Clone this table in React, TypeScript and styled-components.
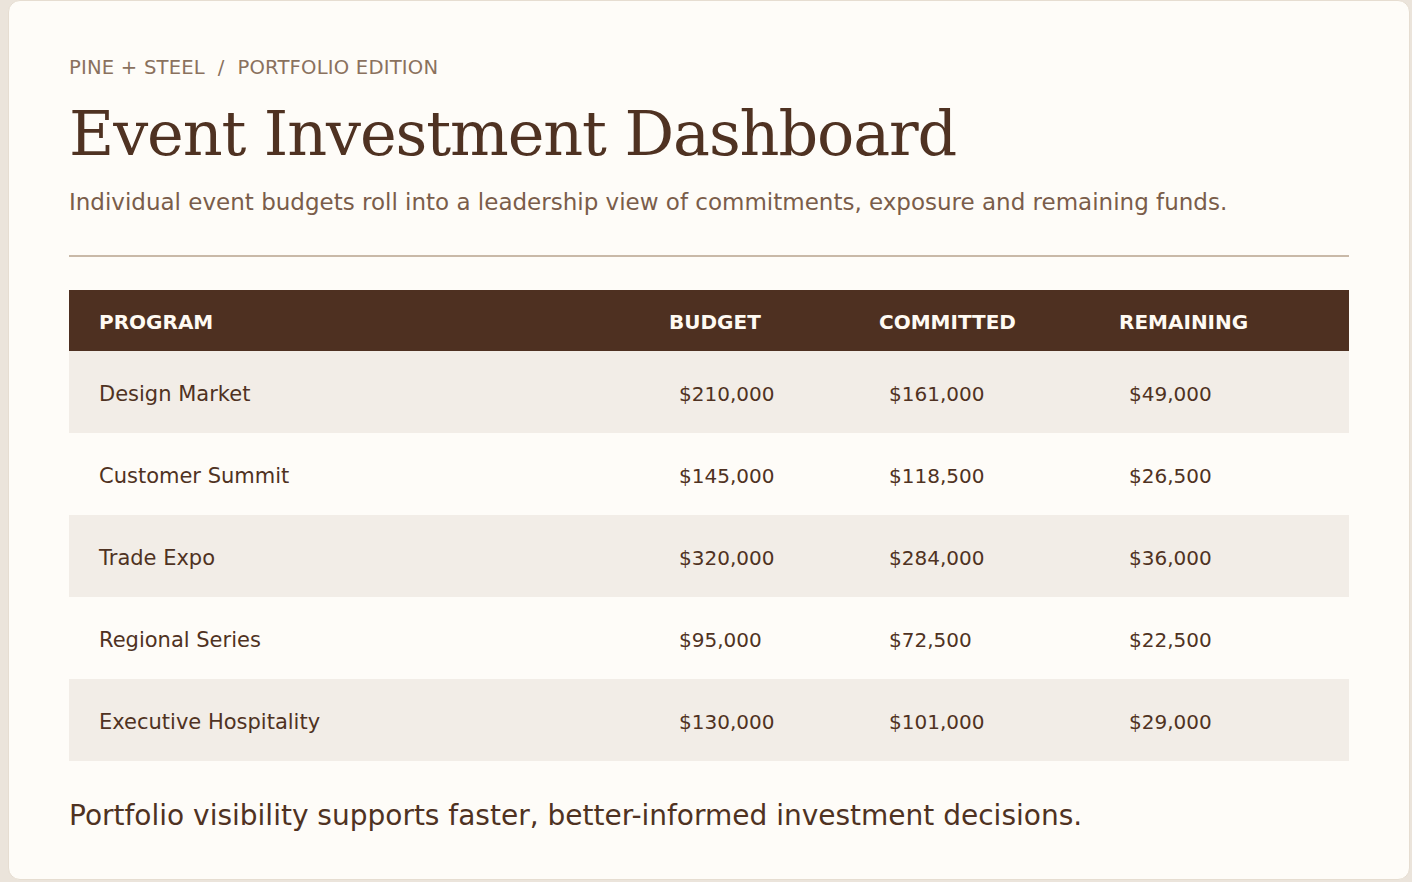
import React from 'react'
import styled, { createGlobalStyle } from 'styled-components'

const GlobalStyle = createGlobalStyle`
  html, body {
    margin: 0;
    padding: 0;
    background: #ebe4db;
  }
  body {
    font-family: "DejaVu Sans", "Liberation Sans", sans-serif;
    color: #4f3222;
  }
`

const Page = styled.div`
  padding: 0 2px 2px 8px;
`

const Card = styled.main`
  box-sizing: border-box;
  height: 880px;
  background: #fefcf8;
  border: 1px solid #e6ddd1;
  border-radius: 12px;
  padding: 53px 60px 0;
`

const Eyebrow = styled.div`
  font-size: 19.6px;
  line-height: 28px;
  color: #8a715e;
  letter-spacing: 0.01em;
`

const Title = styled.h1`
  margin: 16px 0 0;
  font-family: "DejaVu Serif", "Liberation Serif", serif;
  font-weight: 400;
  font-size: 62px;
  line-height: 72px;
  letter-spacing: -0.018em;
  color: #4f3222;
`

const Lede = styled.p`
  margin: 17px 0 0;
  font-size: 23px;
  line-height: 30px;
  color: #7a5d4a;
`

const Divider = styled.hr`
  margin: 38px 0 0;
  border: 0;
  height: 2px;
  background: #c9b9a8;
`

const Table = styled.table`
  width: 100%;
  margin-top: 33px;
  border-collapse: collapse;
  table-layout: fixed;
`

const HeadCell = styled.th<{ $w: number }>`
  box-sizing: border-box;
  width: ${(p) => p.$w}px;
  height: 61px;
  padding: 2px 0 0 30px;
  background: #4e3021;
  color: #fffaf3;
  font-size: 20px;
  font-weight: 700;
  text-align: left;
`

const Row = styled.tr<{ $striped: boolean }>`
  background: ${(p) => (p.$striped ? '#f2ede7' : 'transparent')};
`

const Cell = styled.td<{ $num?: boolean }>`
  box-sizing: border-box;
  height: 82px;
  padding: 4px 0 0 ${(p) => (p.$num ? 40 : 30)}px;
  font-size: ${(p) => (p.$num ? 20 : 21)}px;
  color: #4f3222;
`

const Footnote = styled.p`
  margin: 37px 0 0;
  font-size: 28px;
  line-height: 36px;
  color: #4f3222;
`

const columns = [
  { label: 'PROGRAM', w: 570 },
  { label: 'BUDGET', w: 210 },
  { label: 'COMMITTED', w: 240 },
  { label: 'REMAINING', w: 260 },
]

const rows = [
  ['Design Market', '$210,000', '$161,000', '$49,000'],
  ['Customer Summit', '$145,000', '$118,500', '$26,500'],
  ['Trade Expo', '$320,000', '$284,000', '$36,000'],
  ['Regional Series', '$95,000', '$72,500', '$22,500'],
  ['Executive Hospitality', '$130,000', '$101,000', '$29,000'],
]

export default function App() {
  return (
    <Page>
      <GlobalStyle />
      <Card>
        <Eyebrow>PINE + STEEL&nbsp; / &nbsp;PORTFOLIO EDITION</Eyebrow>
        <Title>Event Investment Dashboard</Title>
        <Lede>
          Individual event budgets roll into a leadership view of commitments, exposure and remaining funds.
        </Lede>
        <Divider />
        <Table>
          <thead>
            <tr>
              {columns.map((c) => (
                <HeadCell key={c.label} $w={c.w}>
                  {c.label}
                </HeadCell>
              ))}
            </tr>
          </thead>
          <tbody>
            {rows.map((r, i) => (
              <Row key={r[0]} $striped={i % 2 === 0}>
                {r.map((v, j) => (
                  <Cell key={j} $num={j > 0}>
                    {v}
                  </Cell>
                ))}
              </Row>
            ))}
          </tbody>
        </Table>
        <Footnote>Portfolio visibility supports faster, better-informed investment decisions.</Footnote>
      </Card>
    </Page>
  )
}
